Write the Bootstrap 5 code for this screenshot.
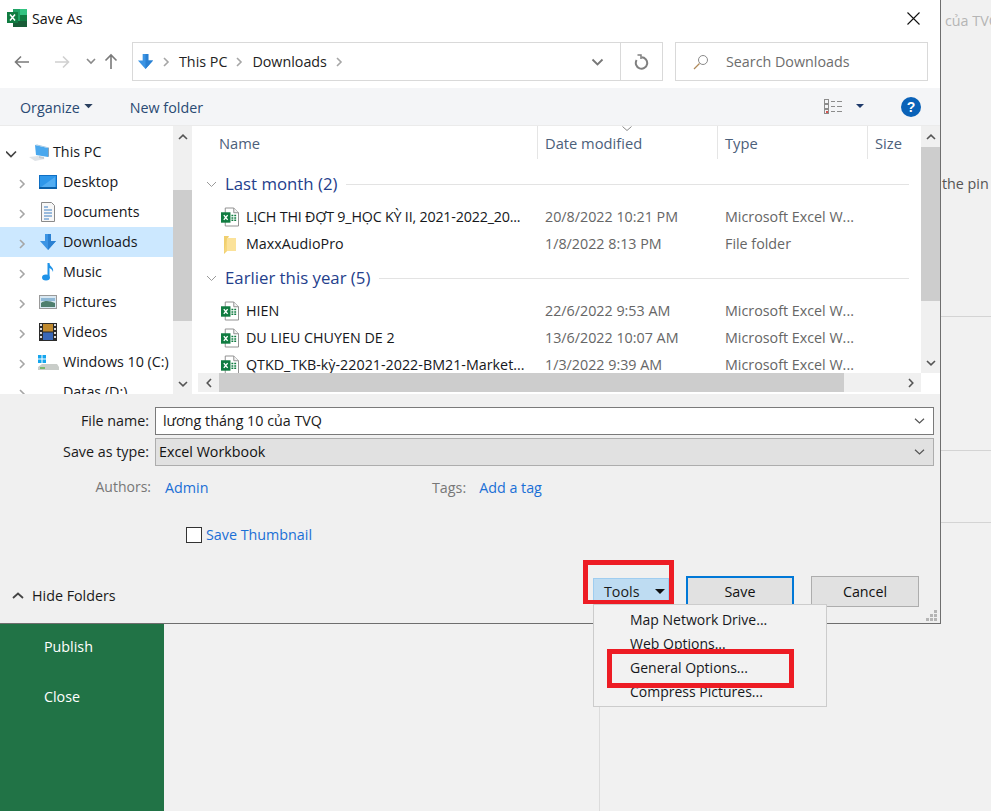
<!doctype html>
<html lang="en">
<head>
<meta charset="utf-8">
<title>Save As</title>
<link href="https://cdn.jsdelivr.net/npm/bootstrap@5.3.0/dist/css/bootstrap.min.css" rel="stylesheet">
<style>
html,body{height:811px;overflow:hidden}
body{background:#f1f1f1;font-family:"Open Sans","Noto Sans","Liberation Sans",sans-serif;font-size:14.3px;color:#1a1a1a;line-height:1.2}
.stage{position:relative;width:991px;height:811px;overflow:hidden}
.behind{width:991px;height:811px}
.behind-top{height:624px;padding-left:941px}
.behind-note1{color:#b5b5b5;padding:12px 0 0 4px;height:175px;white-space:nowrap}
.behind-note2{color:#555;height:141px;white-space:nowrap;margin-left:1px}
.behind-rule{border-top:1px solid #d4d4d4}
.behind-h134{height:134px}
.behind-h72{height:72px}
.sidebar{width:164px;height:187px;background:#217346;color:#fff;padding:14px 0 0 44px}
.sidebar div{height:50px}
.behind-main{width:436px;border-right:1px solid #dcdcdc}
.dialog{position:absolute;left:0;top:0;width:941px;height:624px;background:#f0f0f0;border-right:1px solid #6e6e6e;border-bottom:1px solid #6e6e6e}
.titlebar{height:36px;background:#fff;padding:0 20px 0 7px}
.titlebar span{margin:2px 0 0 5px;color:#111}
.navrow{height:52px;background:#fff;padding:6px 12px 7px 14px}
.navbtns{width:118px}
.addr{width:531px;height:39px;border:1px solid #d9d9d9;padding-left:4px}
.addr-text{color:#222;padding:0 8px 0 9px;margin-top:1px}
.addr-end{margin-left:auto;width:42px;height:100%;border-left:1px solid #d9d9d9}
.search{width:253px;height:39px;margin-left:12px;border:1px solid #d9d9d9;padding-left:17px;color:#6d6d6d}
.search span{margin:1px 0 0 17px}
.cmdbar{height:38px;background:#f4f5f7;padding:0 19px 0 20px;color:#2a4a73;border-bottom:1px solid #ebebeb}
.cmdbar span{margin-top:2px}
.cmdbar .newf{margin-left:37px}
.panes{height:268px;background:#fff}
.tree{width:173px;height:268px;overflow:hidden;flex:none}
.tree-row{height:30px;padding-left:6px;white-space:nowrap;color:#16181c;flex:none}
.tree-row.sel{background:#cce8ff}
.tree-row .arrow{width:14px;flex:none}
.tree-row .arrow.indent{margin-left:12px}
.tree-row .ico{width:24px;height:24px;flex:none;margin:0 3px 0 4px}
.tree-row.lvl0 .ico{margin:0 -2px 0 5px;width:30px}
.treetop{height:11px;flex:none}
.sb-v{width:19px;background:#f0f0f0;flex:none}
.sb-btn{height:21px;flex:none}
.sb-thumb{background:#cdcdcd}
.t-thumb{height:131px;margin-top:43px}
.l-thumb{height:154px;margin-top:0}
.sb-fill{flex:1}
.list-wrap{flex:1;min-width:0}
.list-area{height:247px}
.listing{width:721px;overflow:hidden;flex:none;margin-left:6px}
.colhead{height:33px;color:#4c607a;position:relative;flex:none;font-size:14.7px}
.colhead div{height:100%;padding:9px 0 0 7px;border-right:1px solid #e5e5e5}
.c1{width:340px;padding-left:21px!important}
.c2{width:180px}
.c3{width:150px}
.colhead .c4{border:0}
.sortmark{position:absolute;left:424px;top:0}
.grp{color:#24408c;font-size:16.8px;height:34px;padding-left:8px;flex:none;white-space:nowrap}
.grp::after{content:"";flex:1;border-top:1px solid #e3e3e3;margin:0 10px 0 9px}
.grp svg{margin-right:8px}
.grp.first{margin-top:8px}
.grp.next{margin-top:4px}
.frow{height:27px;white-space:nowrap;flex:none;color:#666}
.frow .fn{width:340px;padding-left:23px;color:#16181c;flex:none}
.frow .fn svg{margin-right:7px;flex:none}
.frow .fd{width:180px;padding-left:7px;flex:none}
.frow .ft{padding-left:7px}
.tight{letter-spacing:-.2px}
.gap-5px{height:2px;flex:none}
.sb-h{height:19px;background:#f0f0f0;margin-left:6px}
.sb-h .btn-h{width:21px;flex:none}
.sb-h .sb-thumb{width:625px;height:100%}
.corner{height:19px;width:19px;background:#fff;flex:none}
.lower{height:229px;padding-top:13px;position:relative}
.flabel{width:151px;text-align:right;padding-right:2px;flex:none}
.finput{height:28px;width:779px;margin-left:4px;border:1px solid #7a7a7a;background:#fff;padding:0 8px 0 7px;flex:none;border-radius:0}
.fselect{background:#e1e1e1;border-color:#adadad;padding-left:3px;color:#111}
.type-row{margin-top:3px}
.props{margin-top:13px;height:17px;color:#777}
.props .authors{width:151px;text-align:right;font-size:14px}
.props a,.thumb a{color:#1a6fd6;text-decoration:none}
.props .admin{margin-left:14px;width:267px}
.props .tag{margin-left:13px}
.thumb{margin-top:31px;padding-left:186px;height:15px}
.thumb .form-check-input{width:16px;height:16px;margin:0 4px 0 0;border:1px solid #333;border-radius:0;background-color:#fff;flex:none}
.bottomline{margin-top:33px;padding:0 21px 0 12px;position:relative}
.hide{margin-top:12px;width:581px;flex:none}
.hide span{margin-left:8px}
.tools{width:76px;height:27px;margin-top:3px;background:#bedcf2;border:1px solid #9fcdf0;padding:4px 3px 0 10px;flex:none}
.tools svg{margin-top:6px}
.wbtn{width:108px;height:31px;margin-top:1px;background:#e1e1e1;border:1px solid #adadad;border-radius:0;padding:0;color:#111;font-size:14.3px;flex:none}
.wbtn:hover{background:#e1e1e1}
.wbtn.primary{border:2px solid #0078d7;margin-left:17px}
.wbtn.other{margin-left:17px}
.grip{position:absolute;right:3px;bottom:2px}
.popmenu{position:absolute;left:593px;top:604px;width:234px;height:103px;min-width:0;margin:0;padding:4px 0 0;display:block;background:#f2f2f2;border:1px solid #ccc;border-radius:0;font-size:14px;z-index:2}
.popmenu .dropdown-item{height:24px;padding:2px 0 0 36px;color:#16181c;line-height:17px;background:none}
.mark-box{position:absolute;border:5px solid #ed1c24;z-index:3}
.mark-tools{left:583px;top:560px;width:91px;height:44px;border-left-width:5px;border-bottom-width:4px}
.mark-general{left:607px;top:649px;width:187px;height:39px}
</style>
</head>
<body>
<svg width="0" height="0" class="d-none">
<defs>
<symbol id="chev-r" viewBox="0 0 10 14"><polyline points="2.5,2 7.5,7 2.5,12" fill="none" stroke="#a6a6a6" stroke-width="2"/></symbol>
<symbol id="xl" viewBox="0 0 20 20"><rect x="6" y="1" width="14" height="18" fill="#21a366"/><rect x="13" y="1" width="7" height="6" fill="#33c481"/><rect x="6" y="7" width="7" height="6" fill="#21a366"/><rect x="13" y="7" width="7" height="6" fill="#107c41"/><rect x="6" y="13" width="14" height="6" fill="#185c37"/><rect x="0" y="4" width="11" height="11" fill="#107c41"/><path d="M3 6.5l5 6M8 6.5l-5 6" stroke="#fff" stroke-width="1.5"/></symbol>
<symbol id="xf" viewBox="0 0 19 20"><path d="M4.5.5h9l5 5v14h-14z" fill="#fff" stroke="#8c8c8c"/><path d="M13.5.5v5h5" fill="#f2f2f2" stroke="#8c8c8c"/><rect x="10" y="7" width="7" height="9" fill="#fff"/><path d="M11 8.5h5M11 11h5M11 13.500h5" stroke="#107c41" stroke-width="1.500" stroke-dasharray="2 1"/><rect x="0" y="5" width="10" height="11" fill="#107c41"/><path d="M3 8l4 5M7 8l-4 5" stroke="#fff" stroke-width="1.500"/></symbol>
<symbol id="dl" viewBox="0 0 18 18"><path d="M6 1h6v7h5l-8 9-8-9h5z" fill="#3b94e4"/><path d="M9 1h3v7h5l-8 9z" fill="#2a80d2"/></symbol>
<symbol id="drop" viewBox="0 0 10 6"><path d="M0 0h10l-5 5z" fill="currentColor"/></symbol>
</defs>
</svg>
<div class="stage">
  <div class="behind">
    <div class="behind-top">
      <div class="behind-note1">của TVQ</div>
      <div class="behind-note2">the pin</div>
      <div class="behind-rule behind-h134"></div>
      <div class="behind-rule behind-h72"></div>
      <div class="behind-rule"></div>
    </div>
    <div class="d-flex">
      <div class="sidebar"><div>Publish</div><div>Close</div></div>
      <div class="behind-main"></div>
    </div>
  </div>

  <div class="dialog d-flex flex-column">
    <div class="titlebar d-flex align-items-center">
      <svg width="20" height="20"><use href="#xl"/></svg><span>Save As</span>
      <svg class="ms-auto" width="13" height="13" viewBox="0 0 13 13"><path d="M.5.500l12 12M12.500.500l-12 12" stroke="#111" stroke-width="1.100"/></svg>
    </div>
    <div class="navrow d-flex align-items-center">
      <div class="navbtns d-flex align-items-center flex-none">
        <svg width="16" height="14" viewBox="0 0 16 14"><path d="M15 7H2M7 1.500L1.500 7 7 12.500" fill="none" stroke="#7a7a7a" stroke-width="1.600"/></svg>
        <svg class="ms-4" width="16" height="14" viewBox="0 0 16 14"><path d="M1 7h13M9 1.500L14.500 7 9 12.500" fill="none" stroke="#d0d0d0" stroke-width="1.600"/></svg>
        <svg class="ms-3" width="10" height="7" viewBox="0 0 10 7"><polyline points="1,1 5,5 9,1" fill="none" stroke="#8a8a8a" stroke-width="1.600"/></svg>
        <svg class="nav-up ms-2" width="14" height="17" viewBox="0 0 14 17"><path d="M7 16V2M1.500 7.500L7 2l5.500 5.500" fill="none" stroke="#7a7a7a" stroke-width="1.600"/></svg>
      </div>
      <div class="addr d-flex align-items-center flex-shrink-0">
        <svg width="17" height="17"><use href="#dl"/></svg>
        <svg class="ms-2" width="8" height="12"><use href="#chev-r"/></svg>
        <span class="addr-text">This PC</span>
        <svg width="8" height="12"><use href="#chev-r"/></svg>
        <span class="addr-text">Downloads</span>
        <svg width="8" height="12"><use href="#chev-r"/></svg>
        <div class="ms-auto d-flex align-items-center pe-3"><svg width="13" height="8" viewBox="0 0 13 8"><polyline points="1.500,1.500 6.500,6.500 11.500,1.500" fill="none" stroke="#777" stroke-width="1.800"/></svg></div>
        <div class="addr-end d-flex align-items-center justify-content-center m-0 flex-shrink-0">
          <svg width="15" height="16" viewBox="0 0 15 16"><path d="M7.500 3.300A5.700 5.700 0 1 1 2.600 6.100" fill="none" stroke="#808080" stroke-width="2"/><polyline points="3.500,1 7,1 7,5" fill="none" stroke="#808080" stroke-width="1.500"/></svg>
        </div>
      </div>
      <div class="search d-flex align-items-center flex-shrink-0">
        <svg width="16" height="16" viewBox="0 0 16 16"><circle cx="10" cy="6" r="4.500" fill="none" stroke="#8a8a8a"/><path d="M6.500 9.500L1 15" stroke="#b08a5a" stroke-width="1.200"/></svg>
        <span>Search Downloads</span>
      </div>
    </div>
    <div class="cmdbar d-flex align-items-center">
      <span>Organize</span>
      <svg class="ms-1" width="9" height="5"><use href="#drop" color="#2a3f5f"/></svg>
      <span class="newf">New folder</span>
      <svg class="ms-auto" width="19" height="16" viewBox="0 0 19 16"><g fill="none" stroke="#8c8c8c"><rect x=".5" y=".5" width="4" height="4"/><rect x=".5" y="5.500" width="4" height="4"/><rect x=".5" y="10.500" width="4" height="4"/></g><path d="M7 2.500h4M13 2.500h5M7 7.500h4M13 7.500h5M7 12.500h4M13 12.500h5" stroke="#8c8c8c"/><rect x="2" y="12" width="2" height="2" fill="#d9534f"/></svg>
      <svg style="margin-left:13px" width="8" height="5"><use href="#drop" color="#1f3a6b"/></svg>
      <svg style="margin-left:37px" width="20" height="20" viewBox="0 0 20 20"><circle cx="10" cy="10" r="10" fill="#0a62b8"/><text x="10" y="15" text-anchor="middle" font-family="Liberation Sans,sans-serif" font-weight="700" font-size="14" fill="#fff">?</text></svg>
    </div>
    <div class="panes d-flex">
      <div class="tree d-flex flex-column">
        <div class="treetop"></div>
        <div class="tree-row lvl0 d-flex align-items-center">
          <span class="arrow"><svg width="13" height="8" viewBox="0 0 13 8"><polyline points="0,1.500 5,6.500 10,1.500" fill="none" stroke="#444" stroke-width="1.700"/></svg></span>
          <svg class="ico" viewBox="0 0 30 24"><path d="M4 17l9-1 7 3-10 2z" fill="#dfe3e7"/><path d="M10 5l13 3v9l-12-2z" fill="#4aa8ee"/><path d="M10 5l2-.5 12 3-1 .5z" fill="#9fc4e0"/><path d="M23 8l1-.5v9l-1 .5z" fill="#8aa4b8"/><path d="M14 16l5 1v2l-5-1z" fill="#c4ccd3"/></svg>
          <span>This PC</span>
        </div>
        <div class="tree-row d-flex align-items-center">
          <span class="arrow indent"><svg width="8" height="12"><use href="#chev-r"/></svg></span>
          <svg class="ico" viewBox="0 0 24 24"><rect x="3.500" y="5.500" width="17" height="13" fill="#2e97ea" stroke="#0f6fc4"/><path d="M5 17L19 7v10z" fill="#52adf2"/><path d="M3 18h18" stroke="#0a5fa8" stroke-width="2"/></svg>
          <span>Desktop</span>
        </div>
        <div class="tree-row d-flex align-items-center">
          <span class="arrow indent"><svg width="8" height="12"><use href="#chev-r"/></svg></span>
          <svg class="ico" viewBox="0 0 24 24"><path d="M5.500 2.500h10l3 3v16h-13z" fill="#f7f7f7" stroke="#8a8a8a"/><path d="M8 7h4M8 10h8M8 13h8M8 16h8M8 19h5" stroke="#3d7fc2"/></svg>
          <span>Documents</span>
        </div>
        <div class="tree-row sel d-flex align-items-center">
          <span class="arrow indent"><svg width="8" height="12"><use href="#chev-r"/></svg></span>
          <svg class="ico" viewBox="0 0 24 24"><use href="#dl" x="3" y="3" width="18" height="18"/></svg>
          <span>Downloads</span>
        </div>
        <div class="tree-row d-flex align-items-center">
          <span class="arrow indent"><svg width="8" height="12"><use href="#chev-r"/></svg></span>
          <svg class="ico" viewBox="0 0 24 24"><path d="M12.500 3v13" stroke="#1f93e8" stroke-width="2"/><ellipse cx="10" cy="17.500" rx="4" ry="3" fill="#1f93e8"/><path d="M13 3c1 4 5 4 4 9-1-3-3-4-4-4z" fill="#1f93e8"/></svg>
          <span>Music</span>
        </div>
        <div class="tree-row d-flex align-items-center">
          <span class="arrow indent"><svg width="8" height="12"><use href="#chev-r"/></svg></span>
          <svg class="ico" viewBox="0 0 24 24"><rect x="3.500" y="5.500" width="17" height="13" fill="#d9e8f2" stroke="#9a9a9a"/><path d="M5 13c4-3 9-2 14 0v4H5z" fill="#4f7f6e"/><path d="M5 8h14v3H5z" fill="#8fb8d6"/></svg>
          <span>Pictures</span>
        </div>
        <div class="tree-row d-flex align-items-center">
          <span class="arrow indent"><svg width="8" height="12"><use href="#chev-r"/></svg></span>
          <svg class="ico" viewBox="0 0 24 24"><rect x="3" y="3" width="18" height="18" fill="#2b2b2b"/><rect x="7" y="4" width="10" height="7.500" fill="#c08a2e"/><rect x="7" y="12.500" width="10" height="7.500" fill="#3a68b8"/><path d="M5 4v16M19 4v16" stroke="#ddd" stroke-width="2" stroke-dasharray="2 2"/></svg>
          <span>Videos</span>
        </div>
        <div class="tree-row d-flex align-items-center">
          <span class="arrow indent"><svg width="8" height="12"><use href="#chev-r"/></svg></span>
          <svg class="ico" viewBox="0 0 24 24"><path d="M2 17l4-3h15l2 3v3H2z" fill="#c9cdc9"/><path d="M4 18h5" stroke="#5fae4e" stroke-width="1.500"/><rect x="2" y="5" width="3.500" height="3.500" fill="#14a5ee"/><rect x="6.500" y="5" width="3.500" height="3.500" fill="#14a5ee"/><rect x="2" y="9.500" width="3.500" height="3.500" fill="#14a5ee"/><rect x="6.500" y="9.500" width="3.500" height="3.500" fill="#14a5ee"/></svg>
          <span>Windows 10 (C:)</span>
        </div>
        <div class="tree-row d-flex align-items-center">
          <span class="arrow indent"><svg width="8" height="12"><use href="#chev-r"/></svg></span>
          <svg class="ico" viewBox="0 0 24 24"><path d="M2 17l4-3h15l2 3v3H2z" fill="#c9cdc9"/></svg>
          <span>Datas (D:)</span>
        </div>
      </div>
      <div class="sb-v d-flex flex-column">
        <div class="sb-btn d-flex align-items-center justify-content-center"><svg width="10" height="6" viewBox="0 0 10 6"><polyline points="1,5 5,1.200 9,5" fill="none" stroke="#555" stroke-width="1.600"/></svg></div>
        <div class="sb-thumb t-thumb"></div>
        <div class="sb-fill"></div>
        <div class="sb-btn d-flex align-items-center justify-content-center"><svg width="10" height="6" viewBox="0 0 10 6"><polyline points="1,1 5,4.800 9,1" fill="none" stroke="#555" stroke-width="1.600"/></svg></div>
      </div>
      <div class="list-wrap d-flex flex-column">
        <div class="list-area d-flex">
          <div class="listing d-flex flex-column">
            <div class="colhead d-flex">
              <div class="c1">Name</div><div class="c2">Date modified</div><div class="c3">Type</div><div class="c4">Size</div>
              <svg class="sortmark" width="10" height="5" viewBox="0 0 10 5"><polyline points="0.500,0.500 5,4.500 9.500,0.500" fill="none" stroke="#888"/></svg>
            </div>
            <div class="grp first d-flex align-items-center"><svg width="11" height="7" viewBox="0 0 11 7"><polyline points="1,1 5.500,5.500 10,1" fill="none" stroke="#9a9a9a"/></svg>Last month (2)</div>
            <div class="gap-5px"></div>
            <div class="frow d-flex align-items-center"><div class="fn tight d-flex align-items-center"><svg width="18" height="20"><use href="#xf"/></svg>LỊCH THI ĐỢT 9_HỌC KỲ II, 2021-2022_20...</div><div class="fd">20/8/2022 10:21 PM</div><div class="ft">Microsoft Excel W...</div></div>
            <div class="frow d-flex align-items-center"><div class="fn d-flex align-items-center"><svg width="18" height="20" viewBox="0 0 18 20"><path d="M3 2h5l-1 2h-1v13l-3 3z" fill="#f0cf6e"/><path d="M6 4h9v13H6z" fill="#fbe29a"/><path d="M6 4l-3 14 3-1z" fill="#f6d77c"/></svg>MaxxAudioPro</div><div class="fd">1/8/2022 8:13 PM</div><div class="ft">File folder</div></div>
            <div class="grp next d-flex align-items-center"><svg width="11" height="7" viewBox="0 0 11 7"><polyline points="1,1 5.500,5.500 10,1" fill="none" stroke="#9a9a9a"/></svg>Earlier this year (5)</div>
            <div class="gap-5px"></div>
            <div class="frow d-flex align-items-center"><div class="fn d-flex align-items-center"><svg width="18" height="20"><use href="#xf"/></svg>HIEN</div><div class="fd">22/6/2022 9:53 AM</div><div class="ft">Microsoft Excel W...</div></div>
            <div class="frow d-flex align-items-center"><div class="fn d-flex align-items-center"><svg width="18" height="20"><use href="#xf"/></svg>DU LIEU CHUYEN DE 2</div><div class="fd">13/6/2022 10:07 AM</div><div class="ft">Microsoft Excel W...</div></div>
            <div class="frow d-flex align-items-center"><div class="fn d-flex align-items-center"><svg width="18" height="20"><use href="#xf"/></svg>QTKD_TKB-kỳ-22021-2022-BM21-Market...</div><div class="fd">1/3/2022 9:39 AM</div><div class="ft">Microsoft Excel W...</div></div>
          </div>
          <div class="sb-v d-flex flex-column ms-auto me-0">
            <div class="sb-btn d-flex align-items-center justify-content-center"><svg width="10" height="6" viewBox="0 0 10 6"><polyline points="1,5 5,1.200 9,5" fill="none" stroke="#555" stroke-width="1.600"/></svg></div>
            <div class="sb-thumb l-thumb"></div>
            <div class="sb-fill"></div>
            <div class="sb-btn d-flex align-items-center justify-content-center"><svg width="10" height="6" viewBox="0 0 10 6"><polyline points="1,1 5,4.800 9,1" fill="none" stroke="#555" stroke-width="1.600"/></svg></div>
          </div>
        </div>
        <div class="d-flex">
          <div class="sb-h d-flex flex-grow-1">
            <div class="btn-h d-flex align-items-center justify-content-center"><svg width="6" height="10" viewBox="0 0 6 10"><polyline points="5,1 1.200,5 5,9" fill="none" stroke="#555" stroke-width="1.600"/></svg></div>
            <div class="sb-thumb"></div>
            <div class="flex-grow-1"></div>
            <div class="btn-h d-flex align-items-center justify-content-center"><svg width="6" height="10" viewBox="0 0 6 10"><polyline points="1,1 4.800,5 1,9" fill="none" stroke="#555" stroke-width="1.600"/></svg></div>
          </div>
          <div class="corner"></div>
        </div>
      </div>
    </div>
    <div class="lower">
      <div class="d-flex align-items-center"><div class="flabel">File name:</div><div class="finput d-flex align-items-center justify-content-between"><span>lương tháng 10 của TVQ</span><svg width="11" height="6" viewBox="0 0 11 6"><polyline points="1,.8 5.500,5 10,.8" fill="none" stroke="#555" stroke-width="1.200"/></svg></div></div>
      <div class="d-flex align-items-center type-row"><div class="flabel">Save as type:</div><div class="finput fselect d-flex align-items-center justify-content-between"><span>Excel Workbook</span><svg class="me-0" width="11" height="6" viewBox="0 0 11 6"><polyline points="1,.8 5.500,5 10,.8" fill="none" stroke="#555" stroke-width="1.200"/></svg></div></div>
      <div class="props d-flex align-items-center"><span class="authors">Authors:</span><a class="admin" href="#">Admin</a><span>Tags:</span><a class="tag" href="#">Add a tag</a></div>
      <div class="thumb d-flex align-items-center"><input class="form-check-input" type="checkbox" aria-label="Save Thumbnail"><a href="#">Save Thumbnail</a></div>
      <div class="bottomline d-flex align-items-start">
        <div class="hide d-flex align-items-center"><svg width="12" height="7" viewBox="0 0 12 7"><polyline points="1,6 6,1.500 11,6" fill="none" stroke="#444" stroke-width="1.800"/></svg><span>Hide Folders</span></div>
        <div class="tools d-flex align-items-start"><span>Tools</span><svg class="ms-auto" width="10" height="6"><use href="#drop" color="#111"/></svg></div>
        <button type="button" class="btn wbtn primary">Save</button>
        <button type="button" class="btn wbtn other">Cancel</button>
      </div>
      <svg class="grip" width="11" height="11" viewBox="0 0 11 11" fill="#b5b5b5"><rect x="8" y="0" width="3" height="3"/><rect x="4" y="4" width="3" height="3"/><rect x="8" y="4" width="3" height="3"/><rect x="0" y="8" width="3" height="3"/><rect x="4" y="8" width="3" height="3"/><rect x="8" y="8" width="3" height="3"/></svg>
    </div>
  </div>

  <ul class="dropdown-menu popmenu list-unstyled">
    <li><span class="dropdown-item">Map Network Drive...</span></li>
    <li><span class="dropdown-item">Web Options...</span></li>
    <li><span class="dropdown-item">General Options...</span></li>
    <li><span class="dropdown-item">Compress Pictures...</span></li>
  </ul>
  <div class="mark-box mark-tools"></div>
  <div class="mark-box mark-general"></div>
</div>
</body>
</html>
